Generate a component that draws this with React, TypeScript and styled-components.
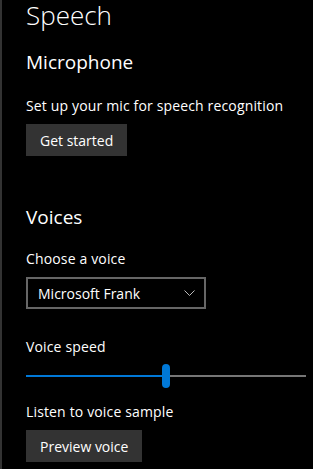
import React from 'react';
import styled, { createGlobalStyle } from 'styled-components';

const GlobalStyle = createGlobalStyle`
  html, body {
    margin: 0;
    padding: 0;
    background-color: #000;
  }
  body {
    font-family: 'Open Sans', 'Noto Sans', sans-serif;
    color: #fff;
  }
`;

const Page = styled.div`
  display: flex;
  flex-direction: column;
  width: 313px;
  height: 469px;
  box-sizing: border-box;
  padding-left: 24px;
  border-left: 2px solid #333;
  background-color: #000;
  overflow: hidden;
`;

const Title = styled.h1`
  margin: 0;
  font-size: 26px;
  font-weight: 300;
  line-height: 31px;
`;

const SectionHeading = styled.h2<{ $gap: number }>`
  margin: ${(p) => p.$gap}px 0 0;
  font-size: 19px;
  font-weight: 400;
  line-height: 28px;
`;

const Label = styled.div<{ $gap: number }>`
  margin-top: ${(p) => p.$gap}px;
  font-size: 14px;
  letter-spacing: 0.15px;
  line-height: 20px;
`;

const ActionButton = styled.button`
  align-self: flex-start;
  margin-top: 8px;
  height: 32px;
  padding: 0 14px;
  border: none;
  background-color: #333;
  color: #fff;
  font-family: inherit;
  font-size: 14px;
`;

const Select = styled.div`
  display: flex;
  align-items: center;
  justify-content: space-between;
  box-sizing: border-box;
  width: 180px;
  height: 32px;
  margin-top: 8px;
  padding: 0 9px 0 10px;
  border: 2px solid #666;
  font-size: 14px;
`;

const SliderRow = styled.div`
  position: relative;
  display: flex;
  align-items: center;
  width: 280px;
  height: 24px;
  margin-top: 7px;
`;

const Track = styled.div`
  flex: 1;
  height: 2px;
  background-color: #767676;
`;

const Fill = styled.div`
  position: absolute;
  left: 0;
  top: 11px;
  height: 2px;
  background-color: #0078d7;
`;

const Thumb = styled.div`
  position: absolute;
  top: 0;
  width: 8px;
  height: 24px;
  border-radius: 4px;
  background-color: #0078d7;
`;

const Chevron = () => (
  <svg width="11" height="6" viewBox="0 0 11 6" fill="none">
    <path d="M0.5 0.5 L5.5 5.5 L10.5 0.5" stroke="#bbb" strokeWidth="1" />
  </svg>
);

const App: React.FC = () => {
  const value = 136;
  return (
    <>
      <GlobalStyle />
      <Page>
        <Title>Speech</Title>
        <SectionHeading $gap={17}>Microphone</SectionHeading>
        <Label $gap={20}>Set up your mic for speech recognition</Label>
        <ActionButton>Get started</ActionButton>
        <SectionHeading $gap={47}>Voices</SectionHeading>
        <Label $gap={18}>Choose a voice</Label>
        <Select>
          <span>Microsoft Frank</span>
          <Chevron />
        </Select>
        <Label $gap={28}>Voice speed</Label>
        <SliderRow>
          <Track />
          <Fill style={{ width: value }} />
          <Thumb style={{ left: value }} />
        </SliderRow>
        <Label $gap={14}>Listen to voice sample</Label>
        <ActionButton>Preview voice</ActionButton>
      </Page>
    </>
  );
};

export default App;
